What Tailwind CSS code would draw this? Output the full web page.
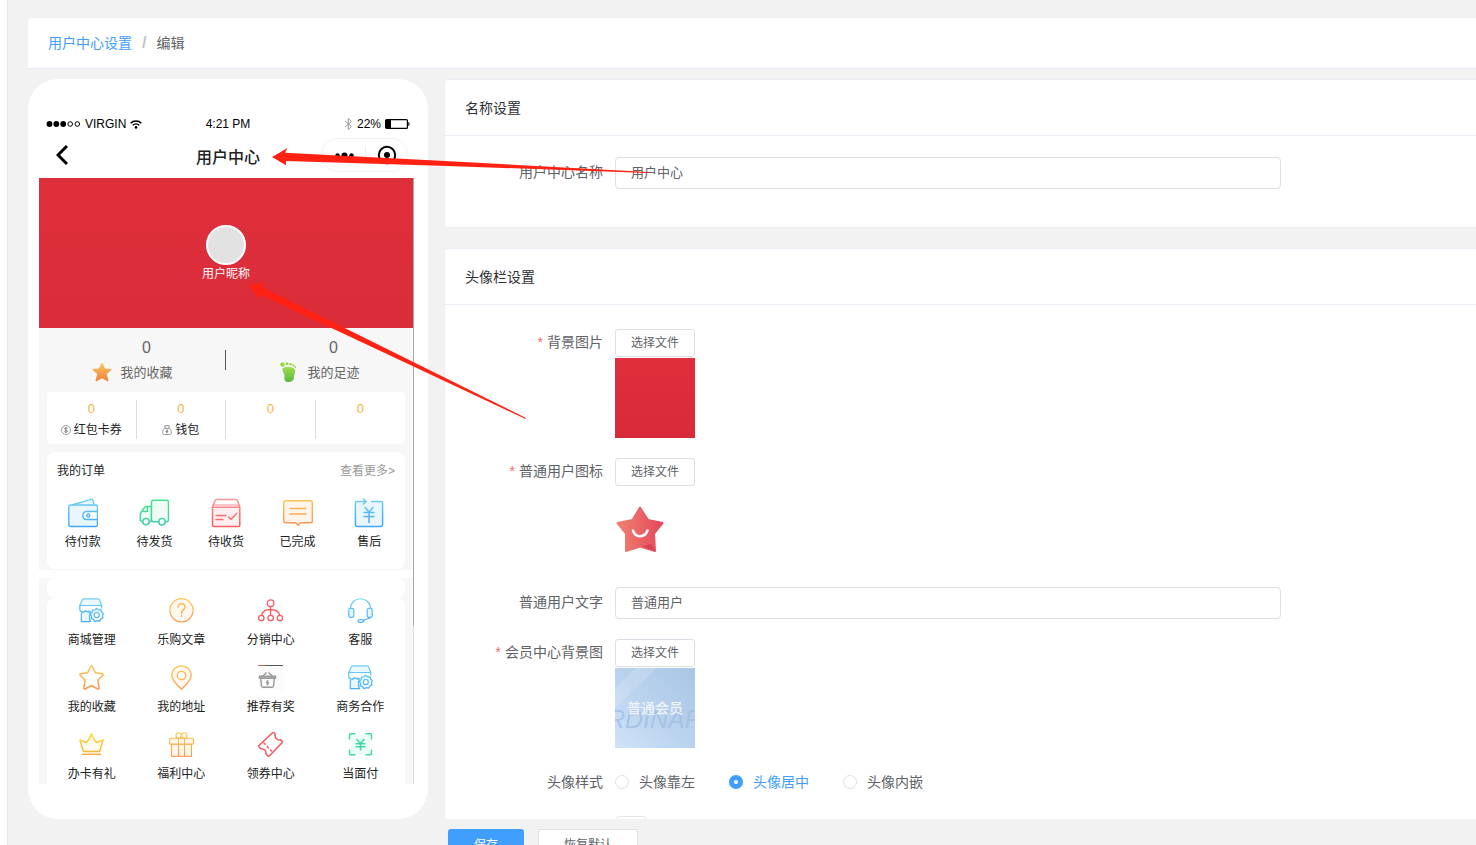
<!DOCTYPE html>
<html lang="zh-CN">
<head>
    <meta charset="UTF-8">
    <meta name="viewport" content="width=device-width, initial-scale=1.0">
    <title>用户中心设置</title>
    <script src="https://cdn.jsdelivr.net/npm/@tailwindcss/browser@4"></script>
    <style>
        body { font-family: 'Liberation Sans', 'Noto Sans CJK SC', sans-serif; }
    </style>
</head>
<body class="relative flex h-screen overflow-hidden bg-white text-sm text-[#606266]">

    <!-- Shared gradients and symbols -->
    <svg class="absolute size-0" aria-hidden="true">
        <defs>
            <linearGradient id="blue" gradientUnits="userSpaceOnUse" x1="0" y1="0" x2="0" y2="28"><stop stop-color="#6fd3f3"/><stop offset="1" stop-color="#3fa6fa"/></linearGradient>
            <linearGradient id="green" gradientUnits="userSpaceOnUse" x1="0" y1="0" x2="0" y2="28"><stop stop-color="#45e583"/><stop offset="1" stop-color="#45cdb4"/></linearGradient>
            <linearGradient id="red" gradientUnits="userSpaceOnUse" x1="0" y1="0" x2="0" y2="28"><stop stop-color="#fb9a9a"/><stop offset="1" stop-color="#f65b60"/></linearGradient>
            <linearGradient id="orange" gradientUnits="userSpaceOnUse" x1="0" y1="0" x2="0" y2="28"><stop stop-color="#fbc851"/><stop offset="1" stop-color="#fd9150"/></linearGradient>
            <linearGradient id="yellow" gradientUnits="userSpaceOnUse" x1="0" y1="0" x2="0" y2="25"><stop stop-color="#fde34a"/><stop offset="1" stop-color="#f9a63c"/></linearGradient>
            <linearGradient id="starFill" x1="0" y1="0" x2="0" y2="1"><stop stop-color="#f4c65c"/><stop offset="1" stop-color="#f5803c"/></linearGradient>
            <linearGradient id="footFill" x1="0" y1="0" x2="0" y2="1"><stop stop-color="#9fdc4e"/><stop offset="1" stop-color="#5cba3c"/></linearGradient>
            <linearGradient id="badgeFill" x1="0" y1="0" x2="1" y2="0"><stop stop-color="#f08070"/><stop offset="1" stop-color="#e4485c"/></linearGradient>
        </defs>
        <symbol id="shop" viewBox="0 0 25 25">
            <g fill="#e9f7fe" stroke="url(#blue)" stroke-width="1.2" stroke-linejoin="round" stroke-linecap="round">
                <path d="M5 .8H19Q20 .8 20.500 1.800L22.700 7.500H.8L3.300 1.800Q3.800 .8 5 .8Z"/>
                <path fill="none" d="M.8 7.500V11C.8 13 2 14 3.500 14S6 13 6.800 12.600C7.600 14 9 14 10 12.800M22.700 7.500V10"/>
                <path d="M2.300 15V23.600H11.500C10 21 10 18 11.500 13.500L9.500 14.200 6.800 13 4.500 14.500Z"/>
                <path d="M17.700 10.300 19.600 12 22 11.700 22.600 14 24.400 15.600 23.500 17.700 24 20 21.900 21 20.600 23.100 18.200 22.700 15.900 23.600 14.500 21.600 12.200 20.800 12.500 18.400 11.300 16.300 13 14.600 13.400 12.200 15.800 12Z"/>
                <circle cx="17.800" cy="17" r="2.500" fill="#fff"/>
            </g>
        </symbol>
    </svg>

    <!-- Collapsed sidebar edge -->
    <div class="w-2 shrink-0 border-r border-[#e6e6e6] bg-white"></div>

    <div class="min-w-0 flex-1 bg-[#f2f2f2] pt-[18px] pl-5">
        <!-- Breadcrumb -->
        <nav class="flex h-[51px] items-center gap-[10px] rounded-tl border-b border-[#e6ebf5] bg-white px-5">
            <a href="#" class="text-[#409eff]">用户中心设置</a>
            <span class="text-base font-bold text-[#c0c4cc]">/</span>
            <span>编辑</span>
        </nav>

        <main class="mt-[10px] flex h-[calc(100vh-105px)] gap-4">
            <!-- Phone preview -->
            <section class="flex w-[400px] shrink-0 flex-col rounded-[30px] bg-white pb-[35px]">
                <div class="flex h-[99px] shrink-0 flex-col px-[18px] pt-[37px] text-black">
                    <div class="grid h-4 grid-cols-3 items-center text-xs">
                        <div class="flex items-center gap-1">
                            <svg class="h-[6px] w-[35px]" viewBox="0 0 35 6"><circle cx="3.500" cy="3" r="2.900"/><circle cx="10.300" cy="3" r="2.900"/><circle cx="17.200" cy="3" r="2.900"/><g fill="none" stroke="#000"><circle cx="24.200" cy="3" r="2.300"/><circle cx="31.300" cy="3" r="2.300"/></g></svg>
                            <span>VIRGIN</span>
                            <svg class="h-[9px] w-3" viewBox="0 0 12 9" fill="none" stroke="#000" stroke-width="1.500"><path d="M.6 3.200C3.600 .2 8.400 .2 11.400 3.200M2.700 5.300C4.600 3.500 7.400 3.500 9.300 5.300"/><circle cx="6" cy="7.400" r="1.300" fill="#000" stroke="none"/></svg>
                        </div>
                        <div class="text-center">4:21 PM</div>
                        <div class="flex items-center justify-end gap-1">
                            <svg class="h-3 w-[9px]" viewBox="0 0 9 12" fill="none" stroke="#999"><path d="M1 3 7.500 8.500 4.300 11.400V.6L7.500 3.500 1 9"/></svg>
                            <span>22%</span>
                            <svg class="h-[10px] w-[25px]" viewBox="0 0 25 10"><rect x=".6" y=".6" width="21.800" height="8.800" rx="1" fill="none" stroke="#000" stroke-width="1.200"/><path d="M1 1H6V9H1ZM23.300 3C25 3.500 25 6.500 23.300 7Z"/></svg>
                        </div>
                    </div>
                    <div class="mt-[6px] grid h-[34px] grid-cols-3 items-center">
                        <a href="#" aria-label="返回" class="pl-[10px]"><svg class="h-5 w-3" viewBox="0 0 12 20" fill="none" stroke="#000" stroke-width="3"><path d="M11 1 2 10 11 19"/></svg></a>
                        <h1 class="pt-[6px] text-center text-base font-medium text-[#222]">用户中心</h1>
                        <div class="mr-[2px] flex h-[34px] w-[87px] items-center justify-self-end rounded-full border border-[#f3f3f3]">
                            <svg class="h-8 w-full" viewBox="0 0 85 32"><circle cx="15.500" cy="16.500" r="2.200"/><circle cx="22.500" cy="16.500" r="3"/><circle cx="29.500" cy="16.500" r="2.200"/><path stroke="#eee" d="M43.500 7V25"/><circle cx="65" cy="16" r="8.200" fill="none" stroke="#000" stroke-width="2"/><circle cx="65" cy="16" r="3"/></svg>
                        </div>
                    </div>
                </div>

                <div class="mr-[14px] ml-[11px] flex min-h-0 flex-1">
                    <div class="min-w-0 flex-1 overflow-hidden bg-[#f7f7f7] text-xs text-[#222]">
                        <div class="flex h-[150px] flex-col items-center bg-linear-to-b from-[#df2f3b] to-[#db2c3a] pt-[47px] text-white">
                            <div class="size-10 rounded-full border-2 border-white bg-[#e2e2e2]"></div>
                            <span class="leading-[18px]">用户昵称</span>
                        </div>

                        <div class="relative grid h-16 grid-cols-2 text-[13px] text-[#666]">
                            <div class="flex justify-center gap-2 pt-[10px]">
                                <svg class="mt-6 size-5" viewBox="0 0 20 20"><path fill="url(#starFill)" stroke="url(#starFill)" stroke-linejoin="round" d="M10 1 12.700 7 19.300 7.500 14.300 12 16 19 10 15.800 4 19 5.700 12 .7 7.500 7.300 7Z"/></svg>
                                <div class="text-center"><div class="text-base leading-5">0</div><div class="mt-[6px] leading-[18px]">我的收藏</div></div>
                            </div>
                            <div class="flex justify-center gap-2 pt-[10px]">
                                <svg class="mt-6 size-5" viewBox="0 0 20 20" fill="url(#footFill)"><path d="M3.500 6.500C6 4.500 13 4.500 15.500 7 17.500 9.500 14.800 12 15 15 15.200 18.500 12.500 20 9.500 20 6 20 4.800 18 5.500 14.500 6 12 3 9.500 3.500 6.500Z"/><g fill="#97d94b"><circle cx="3.500" cy="2.600" r="2.300"/><circle cx="8" cy="1.800" r="1.500"/><circle cx="11.600" cy="2.200" r="1.300"/><circle cx="14.300" cy="3.300" r="1.100"/><circle cx="16.200" cy="5" r="1"/></g></svg>
                                <div class="text-center"><div class="text-base leading-5">0</div><div class="mt-[6px] leading-[18px]">我的足迹</div></div>
                            </div>
                            <div class="absolute top-[22px] right-1/2 h-5 w-px bg-[#555]"></div>
                        </div>

                        <!-- Wallet -->
                        <div class="mx-2 grid h-[52px] grid-cols-4 rounded bg-white py-2 text-center">
                            <div class="border-r border-[#ddd]">
                                <div class="text-[13px] leading-[18px] text-[#fcb03c]">0</div>
                                <div class="mt-[3px] flex items-center justify-center gap-[3px] leading-[18px]">
                                    <svg class="size-[10px]" viewBox="0 0 11 11" fill="none" stroke="#777"><circle cx="5.500" cy="5.500" r="4.900" stroke-width=".8"/><path d="M7.300 3.800C6.500 2.800 3.900 3 4 4.300S7.300 5.500 7.200 6.900 4.200 8.200 3.600 7M5.500 2.300V8.700"/></svg>
                                    红包卡券
                                </div>
                            </div>
                            <div class="border-r border-[#ddd]">
                                <div class="text-[13px] leading-[18px] text-[#fcb03c]">0</div>
                                <div class="mt-[3px] flex items-center justify-center gap-[3px] leading-[18px]">
                                    <svg class="size-[10px]" viewBox="0 0 11 11" fill="none" stroke="#888"><path d="M3.500 3.500 3 .8H8L7.500 3.500M3 3.700H8C9.500 5 10.400 6.500 10.300 8.500 10.200 10 9.500 10.400 8 10.400H3C1.500 10.400 .8 10 .7 8.500 .6 6.500 1.500 5 3 3.700Z"/><path d="M5.500 5V9M4 7H7" stroke-width="1.500"/></svg>
                                    钱包
                                </div>
                            </div>
                            <div class="border-r border-[#ddd] text-[13px] leading-[18px] text-[#fcb03c]">0</div>
                            <div class="text-[13px] leading-[18px] text-[#fcb03c]">0</div>
                        </div>

                        <!-- Orders -->
                        <div class="mx-2 mt-2 rounded-lg bg-white pb-[18px]">
                            <div class="flex h-[38px] items-center justify-between px-[10px]">
                                <h2>我的订单</h2>
                                <a href="#" class="text-[#999]">查看更多&gt;</a>
                            </div>
                            <div class="grid grid-cols-5 pt-2 text-center leading-[18px]">
                                <a href="#" class="flex flex-col items-center gap-[5px]">
                                    <svg class="size-[30px]" viewBox="0 0 30 30" fill="#eaf6ff" stroke="url(#blue)" stroke-width="1.400" stroke-linejoin="round"><path d="M4 7 23 1.300Q24.500 1 25 2.500L26 7"/><rect x=".8" y="7" width="28.700" height="21.500" rx="2"/><path fill="#fff" d="M29.500 13.500H19C13.500 13.500 13.500 21.500 19 21.500H29.500Z"/><circle cx="20.300" cy="17.500" r="1.500"/></svg>
                                    待付款
                                </a>
                                <a href="#" class="flex flex-col items-center gap-[5px]">
                                    <svg class="size-[30px]" viewBox="0 0 30 30" fill="#eefcf5" stroke="url(#green)" stroke-width="1.500" stroke-linejoin="round" stroke-linecap="round"><path d="M12.500 8.500H7.500Q6 8.500 5 10L1.300 15.500V21.500Q1.300 23.500 3 23.500H12.500Z"/><rect x="12.500" y="2.300" width="17" height="21.500" rx="2"/><path fill="none" d="M8.300 9V13.500H4"/><circle cx="7" cy="23.600" r="3.200" fill="#fff"/><circle cx="23" cy="23.800" r="3.200" fill="#fff"/></svg>
                                    待发货
                                </a>
                                <a href="#" class="flex flex-col items-center gap-[5px]">
                                    <svg class="size-[30px]" viewBox="0 0 30 30" fill="#ffefef" stroke="url(#red)" stroke-width="1.500" stroke-linejoin="round"><path fill="#fff" d="M1.500 9 4 2.800Q4.500 1.500 6 1.500H24.500Q26 1.500 26.500 2.800L28.800 9"/><path d="M2 7H28.300" stroke-width="1"/><path d="M1.500 9.300H28.800V27Q28.800 28.600 27 28.600H3.300Q1.500 28.600 1.500 27Z"/><path fill="none" d="M4.500 17.500H15.500M4.500 21.500H12.500M17 18.500 20 21.300 26 15"/></svg>
                                    待收货
                                </a>
                                <a href="#" class="flex flex-col items-center gap-[5px]">
                                    <svg class="size-[30px]" viewBox="0 0 30 30" fill="#fff5ea" stroke="url(#orange)" stroke-width="1.400" stroke-linejoin="round"><path d="M2.500 2.700H27.500Q29.300 2.700 29.300 4.500V23Q29.300 24.800 27.500 24.800H17.500L15 27.300 12.500 24.800H2.500Q.7 24.800 .7 23V4.500Q.7 2.700 2.500 2.700Z"/><path d="M6.500 10.500H23.500M6.500 16H23.500" stroke-width="1.600"/></svg>
                                    已完成
                                </a>
                                <a href="#" class="flex flex-col items-center gap-[5px]">
                                    <svg class="size-[30px]" viewBox="0 0 30 30" fill="#eaf6ff" stroke="url(#blue)" stroke-width="1.500" stroke-linejoin="round" stroke-linecap="round"><rect x="1.500" y="3.500" width="27" height="25" rx="2" stroke="none"/><path fill="none" d="M17.500 3.500H27Q28.600 3.500 28.600 5.200V26.800Q28.600 28.500 27 28.500H3Q1.400 28.500 1.400 26.800V5.200Q1.400 3.500 3 3.500H12M9.500 1 12.300 3.500 9.500 6M11 9.500 15 14 19 9.500M10 14.500H20M10 18.500H20M15 14V24.500"/></svg>
                                    售后
                                </a>
                            </div>
                        </div>
                        <div class="mt-px h-2 bg-white"></div>

                        <!-- Service menu -->
                        <div class="mx-2 h-5 rounded-lg bg-white"></div>
                        <div class="mx-2 grid grid-cols-4 gap-y-[17px] rounded-lg bg-white pb-8 text-center leading-4">
                            <a href="#" class="flex flex-col items-center gap-[9px]">
                                <svg class="size-[25px]"><use href="#shop"/></svg>
                                商城管理
                            </a>
                            <a href="#" class="flex flex-col items-center gap-[9px]">
                                <svg class="size-[25px]" viewBox="0 0 25 25" fill="#fff8ef" stroke="url(#orange)" stroke-width="1.200" stroke-linecap="round"><circle cx="12.500" cy="12.300" r="11.600"/><path fill="none" d="M9 9.300C9 4.500 16 4.800 16 9 16 11.800 12.500 12 12.500 15.300M12.500 17.800V18.200" stroke-width="1.400"/></svg>
                                乐购文章
                            </a>
                            <a href="#" class="flex flex-col items-center gap-[9px]">
                                <svg class="size-[25px]" viewBox="0 0 25 25" fill="none" stroke="#f85a60" stroke-width="1.300"><circle cx="12.600" cy="5.200" r="3.300"/><circle cx="3.300" cy="20" r="2.700"/><circle cx="12.600" cy="20" r="2.700"/><circle cx="22" cy="20" r="2.700"/><path d="M12.600 8.500V17.300M3.500 17.300C4.500 13 8 11.500 12.600 11.500S20.700 13 21.800 17.300"/></svg>
                                分销中心
                            </a>
                            <a href="#" class="flex flex-col items-center gap-[9px]">
                                <svg class="size-[25px]" viewBox="0 0 25 25" fill="#eaf6ff" stroke="url(#blue)" stroke-width="1.200"><path fill="none" d="M2.300 10.500C3.500-2.500 21.500-2.500 22.700 10.500M22.500 19.500C20.500 21 18.500 20.500 15.500 22.500"/><rect x=".8" y="10.300" width="5" height="9" rx="1.500"/><rect x="19.200" y="10.300" width="5" height="9" rx="1.500"/><ellipse cx="12.800" cy="23" rx="2.800" ry="1.500"/></svg>
                                客服
                            </a>
                            <a href="#" class="flex flex-col items-center gap-[9px]">
                                <svg class="size-[25px]" viewBox="0 0 25 25" fill="none" stroke="url(#orange)" stroke-width="1.500" stroke-linejoin="round"><path d="M11.700 1.500Q12.500 .1 13.300 1.500L16.300 7.800 23.300 8.700Q24.800 9.200 23.800 10.300L18.800 15.200 20.200 22.800Q20.200 24.600 18.800 24L12.500 20.500 6.200 24Q4.800 24.600 4.800 22.800L6.200 15.200 1.200 10.300Q.2 9.200 1.700 8.700L8.700 7.800Z"/></svg>
                                我的收藏
                            </a>
                            <a href="#" class="flex flex-col items-center gap-[9px]">
                                <svg class="size-[25px]" viewBox="0 0 25 25" fill="#fff6ec" stroke="url(#orange)" stroke-width="1.300"><path d="M12.500 24.300C8 20 2.800 15.500 2.800 10.200 2.800 5 7 .8 12.500 .8S22.200 5 22.200 10.200C22.200 15.500 17 20 12.500 24.300Z"/><circle cx="12.500" cy="10.500" r="4.200" fill="#fff"/></svg>
                                我的地址
                            </a>
                            <a href="#" class="flex flex-col items-center gap-[9px]">
                                <svg class="size-[25px] bg-[#fafafa]" viewBox="0 0 25 25" fill="none" stroke="#999" stroke-width="1.400" stroke-linejoin="round"><path d="M0 .5H8" stroke="#b56a58" stroke-width="1"/><path d="M8 .5H25" stroke="#555" stroke-width="1"/><path d="M5 11 8.500 7.500M10.500 7.500 14.300 11"/><rect x="1.500" y="11.300" width="16" height="2" fill="#bbb"/><path d="M2.800 13.500 3.500 21Q3.700 22.300 5 22.300H14Q15.300 22.300 15.500 21L16.300 13.500M10 15 8.500 17.700H10.500L9 20.300"/></svg>
                                推荐有奖
                            </a>
                            <a href="#" class="flex flex-col items-center gap-[9px]">
                                <svg class="size-[25px]"><use href="#shop"/></svg>
                                商务合作
                            </a>
                            <a href="#" class="flex flex-col items-center gap-[9px]">
                                <svg class="size-[25px]" viewBox="0 0 25 25" fill="#fffced" stroke="url(#yellow)" stroke-width="1.500" stroke-linejoin="round"><path d="M4.500 19.500 .9 8 7.500 10.500 12.500 3.500 17.500 10.500 24.100 8 20.500 19.500Z"/><circle cx="12.500" cy="2.800" r=".8"/><path d="M3 22.300H22"/></svg>
                                办卡有礼
                            </a>
                            <a href="#" class="flex flex-col items-center gap-[9px]">
                                <svg class="size-[25px]" viewBox="0 0 25 25" fill="#fff6ea" stroke="url(#orange)" stroke-width="1.100"><rect x="2.500" y="12" width="20" height="12.300"/><rect x=".6" y="6.300" width="23.800" height="5.800" rx=".8"/><path fill="none" d="M9.500 6.300V24.300M15.500 6.300V24.300"/><circle cx="9.700" cy="3.500" r="2.700" fill="none"/><circle cx="15.300" cy="3.500" r="2.700" fill="none"/></svg>
                                福利中心
                            </a>
                            <a href="#" class="flex flex-col items-center gap-[9px]">
                                <svg class="size-[25px]" viewBox="0 0 25 25" fill="none" stroke="#f4585c" stroke-width="1.500" stroke-linejoin="round"><path d="M14.500 .8Q15.300 .2 16 .8L17.300 2.200C16.300 5.500 19 8.500 22.700 7.800L24 9.200Q24.600 10 24 10.700L11.300 24Q10.500 24.600 9.800 24L8 22C8.500 18.800 6 16.300 2.700 16.700L1 15Q.3 14.200 1 13.500Z"/><path stroke-dasharray="3 1.800" d="M5.500 10.500 14 19.500"/></svg>
                                领券中心
                            </a>
                            <a href="#" class="flex flex-col items-center gap-[9px]">
                                <svg class="size-[25px]" viewBox="0 0 25 25" fill="none" stroke="#3ed8a8" stroke-width="1.500"><rect x="3" y="3" width="19" height="19" fill="#eefcf6" stroke="none"/><path d="M1.500 7.500V3Q1.500 1.800 2.800 1.800H7.500M17.500 1.800H22.200Q23.500 1.800 23.500 3V7.500M23.500 17.500V21.500Q23.500 22.700 22.200 22.700H17.500M7.500 22.700H2.800Q1.500 22.700 1.500 21.500V17.500M8.500 7 12.500 11.500 16.500 7M7.500 11.700H17.500M7.500 14.700H17.500M12.500 11.500V18.500"/></svg>
                                当面付
                            </a>
                        </div>
                    </div>
                    <!-- Scroll position -->
                    <div class="w-px bg-[#ddd]"><div class="h-[74%] bg-[#aaa]"></div></div>
                </div>
            </section>

            <!-- Settings -->
            <form id="settingsForm" class="min-w-0 flex-1 overflow-hidden">
                <section class="rounded-l border border-r-0 border-[#ebeef5] bg-white pb-[38px]">
                    <h2 class="flex h-14 items-center border-b border-[#ebeef5] px-5 text-[#303133]">名称设置</h2>
                    <div class="mt-[21px] mr-[195px] ml-5 flex">
                        <label for="centerName" class="w-[150px] pr-3 text-right leading-[30px]">用户中心名称</label>
                        <input id="centerName" type="text" value="用户中心" class="h-8 min-w-0 flex-1 rounded border border-[#dcdfe6] px-[15px] pb-1 text-[13px]">
                    </div>
                </section>

                <section class="mt-5 rounded-l border border-r-0 border-[#ebeef5] bg-white pb-10">
                    <h2 class="flex h-14 items-center border-b border-[#ebeef5] px-5 text-[#303133]">头像栏设置</h2>
                    <div class="mr-[195px] ml-5 flex flex-col gap-5 pt-6">
                        <div class="flex">
                            <label for="bgImage" class="w-[150px] pr-3 text-right leading-[26px]"><span class="mr-1 text-[#f56c6c]">*</span>背景图片</label>
                            <div>
                                <button id="bgImage" type="button" class="block h-7 w-20 rounded-[3px] border border-[#dcdfe6] bg-white text-xs">选择文件</button>
                                <div class="mt-px size-20 bg-linear-to-b from-[#e02f3b] to-[#d92a3a]"></div>
                            </div>
                        </div>
                        <div class="flex">
                            <label for="userIcon" class="w-[150px] pr-3 text-right leading-[26px]"><span class="mr-1 text-[#f56c6c]">*</span>普通用户图标</label>
                            <div>
                                <button id="userIcon" type="button" class="block h-7 w-20 rounded-[3px] border border-[#dcdfe6] bg-white text-xs">选择文件</button>
                                <svg class="mt-px size-20" viewBox="0 0 80 80"><path fill="url(#badgeFill)" stroke="url(#badgeFill)" stroke-width="2" stroke-linejoin="round" d="M25 20.500 33 33 47.500 36 39 46.500 40 64 25 59.500 11 64 11 46.500 2.500 36 17.500 33Z"/><path fill="#d43c52" opacity=".8" d="M27 59.500 36 57 39.500 63.500Z"/><path fill="none" stroke="#fff" stroke-width="2.500" stroke-linecap="round" d="M18 43.500C20 51 30 51 32.500 43.500"/></svg>
                            </div>
                        </div>
                        <div class="flex">
                            <label for="userText" class="w-[150px] pr-3 text-right leading-[30px]">普通用户文字</label>
                            <input id="userText" type="text" value="普通用户" class="h-8 min-w-0 flex-1 rounded border border-[#dcdfe6] px-[15px] pb-1 text-[13px]">
                        </div>
                        <div class="flex">
                            <label for="memberBg" class="w-[150px] pr-3 text-right leading-[26px]"><span class="mr-1 text-[#f56c6c]">*</span>会员中心背景图</label>
                            <div>
                                <button id="memberBg" type="button" class="block h-7 w-20 rounded-[3px] border border-[#dcdfe6] bg-white text-xs">选择文件</button>
                                <div class="relative mt-px flex size-20 items-center justify-center overflow-hidden bg-linear-to-tr from-[#cfe3fa] via-[#b9d2ed] to-[#a9c6e6]">
                                    <svg class="absolute inset-0 size-20" viewBox="0 0 80 80"><path fill="#fff" opacity=".15" d="M0 20 21 0H42L0 40Z"/></svg>
                                    <span class="absolute top-[37px] -left-2 text-[25px] leading-7 text-[#9dbbe0]/70 italic">RDINAR</span>
                                    <span class="relative text-sm font-medium text-[#eef4fb]">普通会员</span>
                                </div>
                            </div>
                        </div>
                        <div class="flex h-7 items-center" role="radiogroup" aria-labelledby="avatarStyle">
                            <span id="avatarStyle" class="w-[150px] pr-3 text-right">头像样式</span>
                            <div class="flex gap-[34px]">
                                <label class="flex items-center gap-[10px]">
                                    <input type="radio" name="avatar" class="size-[14px] appearance-none rounded-full border border-[#dcdfe6] bg-white checked:border-5 checked:border-[#409eff]">头像靠左
                                </label>
                                <label class="flex items-center gap-[10px] text-[#409eff]">
                                    <input type="radio" name="avatar" checked class="size-[14px] appearance-none rounded-full border border-[#dcdfe6] bg-white checked:border-5 checked:border-[#409eff]">头像居中
                                </label>
                                <label class="flex items-center gap-[10px]">
                                    <input type="radio" name="avatar" class="size-[14px] appearance-none rounded-full border border-[#dcdfe6] bg-white checked:border-5 checked:border-[#409eff]">头像内嵌
                                </label>
                            </div>
                        </div>
                        <button type="button" aria-label="颜色" class="ml-[150px] size-8 shrink-0 rounded border border-[#e6e6e6] bg-white"></button>
                    </div>
                </section>
            </form>
        </main>

        <div class="mt-[10px] ml-[420px] flex gap-[14px] text-xs">
            <button form="settingsForm" type="submit" class="h-8 rounded-[3px] bg-[#409eff] px-[26px] text-white">保存</button>
            <button form="settingsForm" type="reset" class="h-8 rounded-[3px] border border-[#dcdfe6] bg-white px-[25px]">恢复默认</button>
        </div>
    </div>

    <!-- Pointers from the preview to its settings -->
    <svg class="pointer-events-none absolute top-0 left-0 h-[430px] w-[660px]" viewBox="0 0 660 430" fill="#ff2213">
        <path d="M272 157 287.500 148 285 152.800 440 160.700 648 172 648 173 440 165.700 286 161 286 165.300Z"/>
        <path d="M248.500 285 265.300 283 262 287 526 418 525.500 419 260 294.500 259 299.300Z"/>
    </svg>
</body>
</html>
